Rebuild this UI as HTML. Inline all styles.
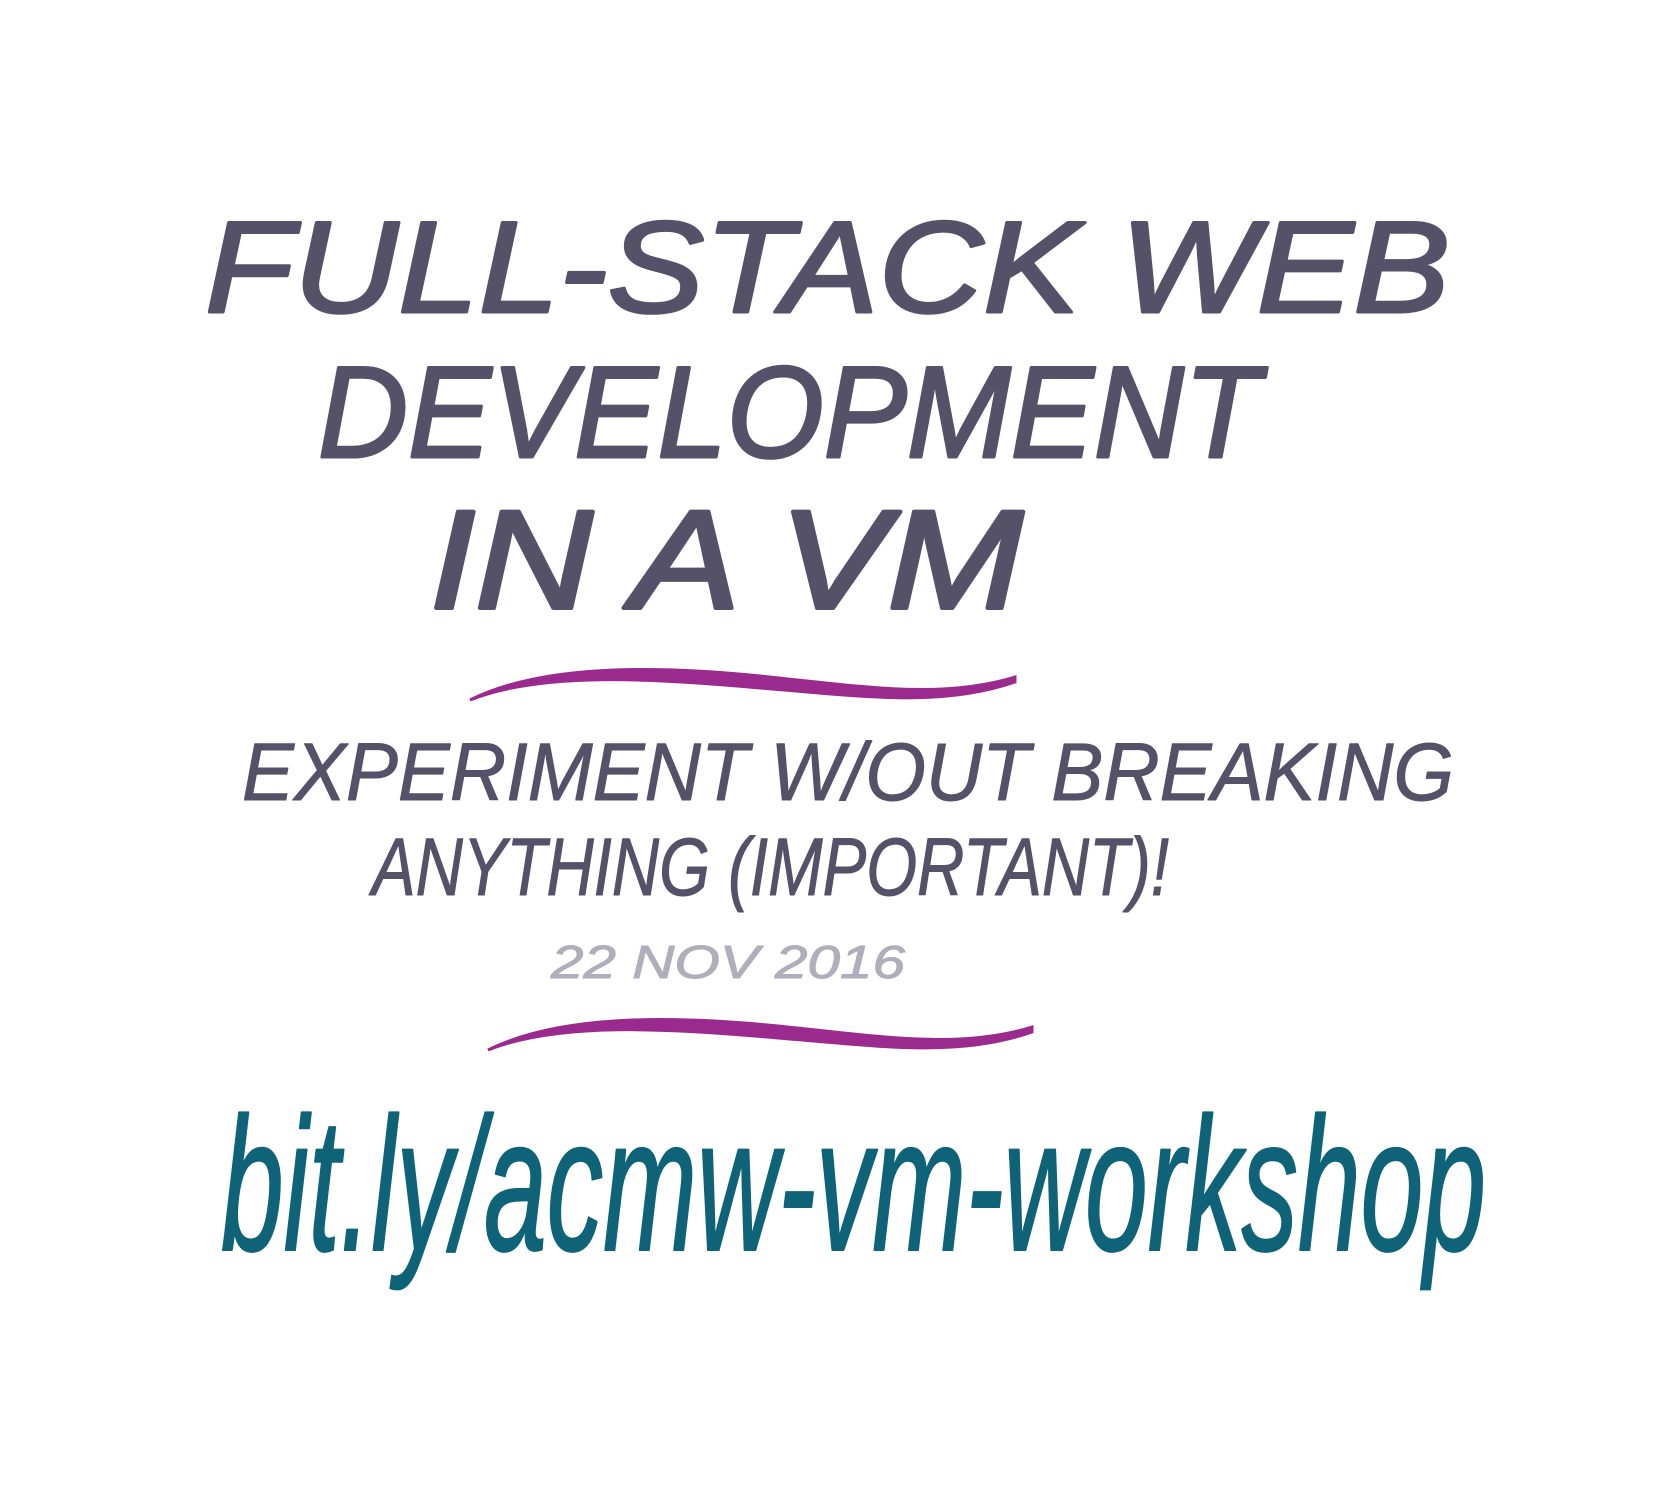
<!DOCTYPE html>
<html><head><meta charset="utf-8"><style>
html,body{margin:0;padding:0;background:#fff;width:1680px;height:1494px;overflow:hidden}
svg{display:block}
text{font-family:"Liberation Sans",sans-serif;font-weight:normal;font-style:italic}
</style></head><body>
<svg width="1680" height="1494" viewBox="0 0 1680 1494">
<rect width="1680" height="1494" fill="#fff"/>
<g fill="#545169" stroke="#545169" stroke-linejoin="round" stroke-linecap="round">
<text x="205" y="312" font-size="130" stroke-width="3" textLength="1245" lengthAdjust="spacingAndGlyphs">FULL-STACK WEB</text>
<text x="318" y="457" font-size="130" stroke-width="3" textLength="942" lengthAdjust="spacingAndGlyphs">DEVELOPMENT</text>
<text x="430" y="608" font-size="140" stroke-width="4" textLength="593" lengthAdjust="spacingAndGlyphs">IN A VM</text>
<text x="242" y="800" font-size="82" stroke-width="1" textLength="1212" lengthAdjust="spacingAndGlyphs">EXPERIMENT W/OUT BREAKING</text>
<text x="372" y="895" font-size="82" stroke-width="1" textLength="797" lengthAdjust="spacingAndGlyphs">ANYTHING (IMPORTANT)!</text>
</g>
<text x="551" y="978" font-size="46" fill="#b0aebb" stroke="#b0aebb" stroke-width="1" textLength="354" lengthAdjust="spacingAndGlyphs">22 NOV 2016</text>
<path d="M470 700 C540 665 650 665 760 676 C860 686 940 700 1015 677 L1015 682 C940 708 860 696 760 688 C650 678 540 672 470 700 Z" fill="#9b2a8e" stroke="#9b2a8e" stroke-width="3"/>
<path d="M488 1050 C558 1015 668 1015 778 1026 C878 1036 958 1050 1032 1027 L1032 1032 C958 1058 878 1046 778 1038 C668 1028 558 1022 488 1050 Z" fill="#9b2a8e" stroke="#9b2a8e" stroke-width="3"/>
<text x="221" y="1250" font-size="190" fill="#0f6378" stroke="#0f6378" stroke-width="2" stroke-linejoin="round" textLength="1265" lengthAdjust="spacingAndGlyphs">bit.ly/acmw-vm-workshop</text>
</svg>
</body></html>
